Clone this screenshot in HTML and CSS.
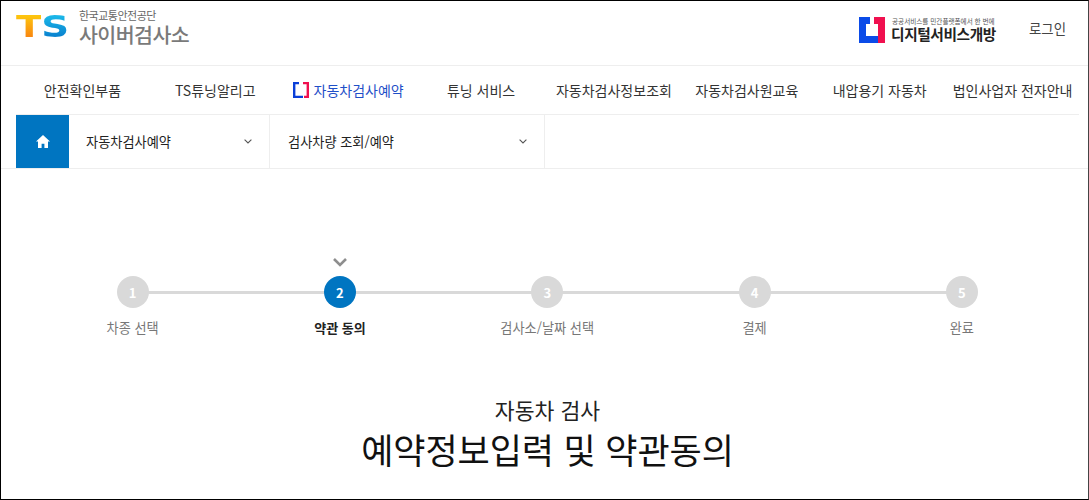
FILE: index.html
```html
<!DOCTYPE html>
<html lang="ko">
<head>
<meta charset="utf-8">
<title>사이버검사소</title>
<link rel="stylesheet" href="styles.css">
</head>
<body>
<div class="frame">
  <header class="top">
    <a class="brand">
      <span class="ts"><span class="ts-t">T</span><span class="ts-s">S</span></span>
      <span class="brand-text">
        <span class="brand-sub">한국교통안전공단</span>
        <span class="brand-main">사이버검사소</span>
      </span>
    </a>
    <div class="top-right">
      <a class="digital">
        <svg class="digital-mark" width="26" height="26" viewBox="0 0 26 26">
          <path d="M0 0H11V7H7V19H19V26H0Z" fill="#0b4be8"/>
          <path d="M15 0H26V26H19V7H15Z" fill="#f0104f"/>
          <path d="M15 7H19V19Z" fill="#fff"/>
        </svg>
        <span class="digital-text">
          <span class="digital-sub">공공서비스를 민간플랫폼에서 한 번에</span>
          <span class="digital-main">디지털서비스개방</span>
        </span>
      </a>
      <a class="login">로그인</a>
    </div>
  </header>

  <nav class="gnb">
    <a>안전확인부품</a>
    <a>TS튜닝알리고</a>
    <a class="on">
      <svg class="on-mark" width="16" height="16" viewBox="0 0 16 16">
        <path d="M6 1H1.2V15H10" fill="none" stroke="#0b3fd8" stroke-width="2.4"/>
        <path d="M10 1H14.8V15H11" fill="none" stroke="#f0104f" stroke-width="2.4"/>
      </svg>
      자동차검사예약
    </a>
    <a>튜닝 서비스</a>
    <a>자동차검사정보조회</a>
    <a>자동차검사원교육</a>
    <a>내압용기 자동차</a>
    <a>법인사업자 전자안내</a>
  </nav>

  <div class="crumbs">
    <a class="home">
      <svg width="14" height="13" viewBox="0 0 14 13">
        <path d="M7 0L14 6.4H12V13H8.4V8.8H5.6V13H2V6.4H0Z" fill="#fff"/>
      </svg>
    </a>
    <a class="crumb crumb-a"><span>자동차검사예약</span><svg class="chev" width="8" height="5" viewBox="0 0 8 5"><path d="M.6.6L4 4 7.4.6" fill="none" stroke="#555" stroke-width="1.1"/></svg></a>
    <a class="crumb crumb-b"><span>검사차량 조회/예약</span><svg class="chev" width="8" height="5" viewBox="0 0 8 5"><path d="M.6.6L4 4 7.4.6" fill="none" stroke="#555" stroke-width="1.1"/></svg></a>
  </div>

  <main>
    <ol class="steps">
      <li class="step"><span class="tick"></span><span class="dot">1</span><span class="label">차종 선택</span></li>
      <li class="step current">
        <svg class="tick" width="14" height="10" viewBox="0 0 14 10"><path d="M1 2L7 8 13 2" fill="none" stroke="#8e8e8e" stroke-width="2.6"/></svg>
        <span class="dot">2</span><span class="label">약관 동의</span>
      </li>
      <li class="step"><span class="tick"></span><span class="dot">3</span><span class="label">검사소/날짜 선택</span></li>
      <li class="step"><span class="tick"></span><span class="dot">4</span><span class="label">결제</span></li>
      <li class="step"><span class="tick"></span><span class="dot">5</span><span class="label">완료</span></li>
    </ol>
    <div class="title">
      <p class="title-sub">자동차 검사</p>
      <h1 class="title-main">예약정보입력 및 약관동의</h1>
    </div>
  </main>
</div>
</body>
</html>
```
FILE: styles.css
```css
* { box-sizing: border-box; }
html, body { margin: 0; padding: 0; }
body {
  font-family: "Noto Sans CJK KR", "Noto Sans", sans-serif;
  background: #fff;
  color: #222;
}
a { color: inherit; text-decoration: none; }
.frame {
  width: 1089px;
  height: 500px;
  border: 1px solid #000;
  border-right-color: #444;
  overflow: hidden;
}
.top {
  height: 65px;
  border-bottom: 1px solid #eee;
  display: flex;
  justify-content: space-between;
  align-items: flex-start;
  padding: 0 22px 0 15px;
}
.brand { display: flex; align-items: flex-start; padding-top: 8px; }
.ts {
  width: 63px;
  font: 700 31px/32px "DejaVu Sans", sans-serif;
  letter-spacing: -1px;
  padding-top: 1px;
  display: flex;
  transform: scaleX(1.25);
  transform-origin: left center;
}
.ts-t {
  background: linear-gradient(180deg, #fdc40e 20%, #f98a10 80%);
  -webkit-background-clip: text;
  background-clip: text;
  color: transparent;
}
.ts-s {
  background: linear-gradient(180deg, #1ab6e8 20%, #0a84d0 80%);
  -webkit-background-clip: text;
  background-clip: text;
  color: transparent;
}
.brand-text { display: flex; flex-direction: column; }
.brand-sub { font-size: 11px; line-height: 12px; color: #666; letter-spacing: -.5px; }
.brand-main { font-size: 20.6px; line-height: 25px; font-weight: 500; color: #7a7a7a; letter-spacing: -.6px; margin-top: 1px; }
.top-right { display: flex; align-items: flex-start; gap: 33px; padding-top: 16px; }
.digital { display: flex; gap: 6px; }
.digital-mark { display: block; }
.digital-text { display: flex; flex-direction: column; width: 105px; }
.digital-sub { font-size: 6.6px; line-height: 8px; color: #555; padding-left: 1px; white-space: nowrap; }
.digital-main { font-size: 14.7px; line-height: 18px; font-weight: 700; color: #222; letter-spacing: -.4px; white-space: nowrap; }
.login { font-size: 13.4px; line-height: 22px; color: #444; }
.gnb {
  height: 49px;
  border-bottom: 1px solid #eee;
  margin-left: 15px;
  margin-right: 9px;
  display: grid;
  grid-template-columns: repeat(8, 1fr);
}
.gnb a {
  display: flex;
  align-items: center;
  justify-content: center;
  gap: 5px;
  font-size: 14px;
  color: #333;
  white-space: nowrap;
}
.gnb a.on { color: #1f4fc8; }
.on-mark { display: block; }
.crumbs {
  height: 54px;
  border-bottom: 1px solid #eee;
  display: flex;
  padding-left: 15px;
}
.home {
  width: 53px;
  background: #0075c1;
  display: flex;
  align-items: center;
  justify-content: center;
}
.crumb {
  display: flex;
  align-items: center;
  justify-content: space-between;
  font-size: 13.2px;
  color: #222;
  border-right: 1px solid #eee;
}
.crumb-a { width: 201px; padding: 0 17px 1px 17px; }
.crumb-b { width: 275px; padding: 0 17px 1px 18px; }
.chev { display: block; }
main { display: block; }
.steps {
  list-style: none;
  margin: 88px 0 0;
  padding: 0 0 0 28px;
  display: grid;
  grid-template-columns: repeat(5, 207.3px);
  background: linear-gradient(#d9d9d9, #d9d9d9) no-repeat 132px 34px / 830px 3px;
}
.step { display: flex; flex-direction: column; align-items: center; }
.tick { display: block; height: 10px; width: 14px; margin-bottom: 9px; }
.dot {
  width: 32px;
  height: 32px;
  border-radius: 50%;
  background: #d9d9d9;
  color: #fff;
  font-size: 13px;
  font-weight: 700;
  display: flex;
  align-items: center;
  justify-content: center;
}
.label { font-size: 13.2px; line-height: 20px; color: #777; margin-top: 10px; white-space: nowrap; }
.current .dot { background: #0075c1; }
.current .label { color: #222; font-weight: 700; font-size: 13px; }
.title { text-align: center; margin-top: 57px; padding-left: 6px; }
.title-sub { margin: 0; font-size: 21.6px; line-height: 30px; font-weight: 400; color: #222; }
.title-main { margin: 0; font-size: 35px; line-height: 48px; font-weight: 400; color: #111; letter-spacing: -.1px; }
```
